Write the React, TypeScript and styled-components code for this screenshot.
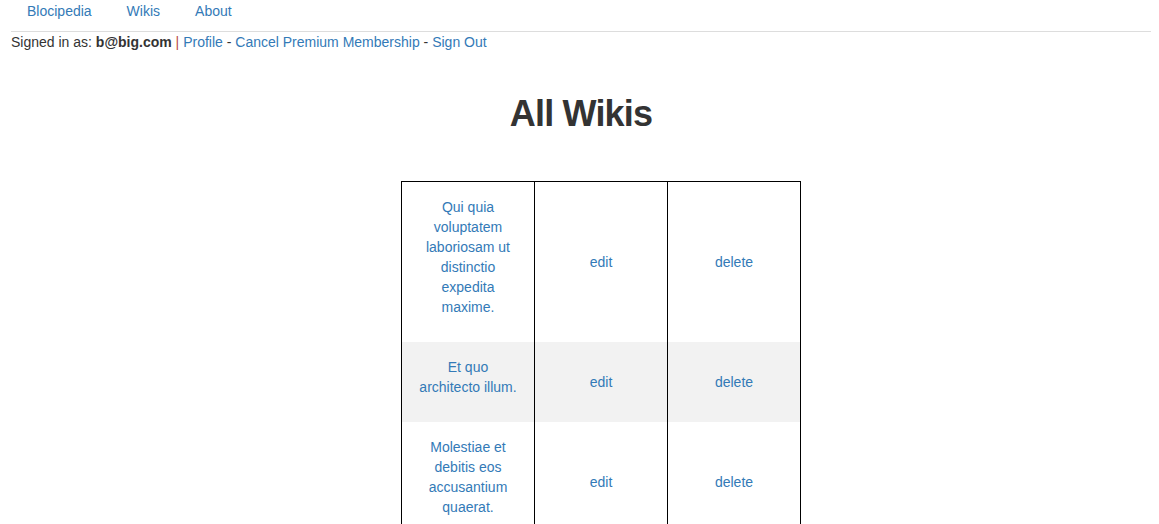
import React from "react";
import styled, { createGlobalStyle } from "styled-components";

const Global = createGlobalStyle`
  html, body { margin: 0; padding: 0; background: #fff; }
  body {
    font-family: "Liberation Sans", Arial, Helvetica, sans-serif;
    font-size: 14px;
    line-height: 20px;
    color: #333;
  }
  * { box-sizing: border-box; }
`;

const Page = styled.div`
  padding: 0 8px 0 11px;
`;

const NavTabs = styled.ul`
  display: flex;
  list-style: none;
  margin: 0;
  padding: 0;
  border-bottom: 1px solid #ddd;
`;

const NavItem = styled.li`
  margin-right: 4px;
`;

const NavLink = styled.a`
  display: block;
  padding: 1px 15px 10px 16px;
  color: #337ab7;
  text-decoration: none;
`;

const UserBar = styled.div`
  white-space: nowrap;
`;

const Strong = styled.strong`
  font-weight: bold;
  color: #333;
`;

const Pipe = styled.span`
  color: #b94a48;
`;

const Link = styled.a`
  color: #337ab7;
  text-decoration: none;
`;

const Title = styled.h1`
  margin: 42px 0 47px;
  font-size: 36px;
  line-height: 1.1;
  font-weight: bold;
  letter-spacing: -0.8px;
  text-align: center;
  color: #333;
`;

const TableWrap = styled.div`
  display: flex;
  justify-content: center;
  padding-left: 40px;
`;

const Table = styled.table`
  width: 400px;
  border-collapse: collapse;
  border: 1px solid #000;
  border-bottom: none;
  table-layout: fixed;
`;

const Row = styled.tr<{ $striped?: boolean }>`
  background: ${(p) => (p.$striped ? "#f2f2f2" : "#fff")};
`;

const Cell = styled.td`
  border-left: 1px solid #000;
  border-right: 1px solid #000;
  padding: 15px 15px;
  text-align: center;
  vertical-align: middle;
`;

const CellText = styled.p`
  margin: 0 0 10px;
`;

const wikis = [
  "Qui quia voluptatem laboriosam ut distinctio expedita maxime.",
  "Et quo architecto illum.",
  "Molestiae et debitis eos accusantium quaerat.",
];

export default function App() {
  return (
    <>
      <Global />
      <Page>
        <NavTabs>
          <NavItem>
            <NavLink href="#">Blocipedia</NavLink>
          </NavItem>
          <NavItem>
            <NavLink href="#">Wikis</NavLink>
          </NavItem>
          <NavItem>
            <NavLink href="#">About</NavLink>
          </NavItem>
        </NavTabs>
        <UserBar>
          Signed in as: <Strong>b@big.com</Strong> <Pipe>|</Pipe>{" "}
          <Link href="#">Profile</Link> -{" "}
          <Link href="#">Cancel Premium Membership</Link> -{" "}
          <Link href="#">Sign Out</Link>
        </UserBar>
        <Title>All Wikis</Title>
        <TableWrap>
          <Table>
            <tbody>
              {wikis.map((w, i) => (
                <Row key={i} $striped={i % 2 === 1}>
                  <Cell>
                    <CellText>
                      <Link href="#">{w}</Link>
                    </CellText>
                  </Cell>
                  <Cell>
                    <Link href="#">edit</Link>
                  </Cell>
                  <Cell>
                    <Link href="#">delete</Link>
                  </Cell>
                </Row>
              ))}
            </tbody>
          </Table>
        </TableWrap>
      </Page>
    </>
  );
}
